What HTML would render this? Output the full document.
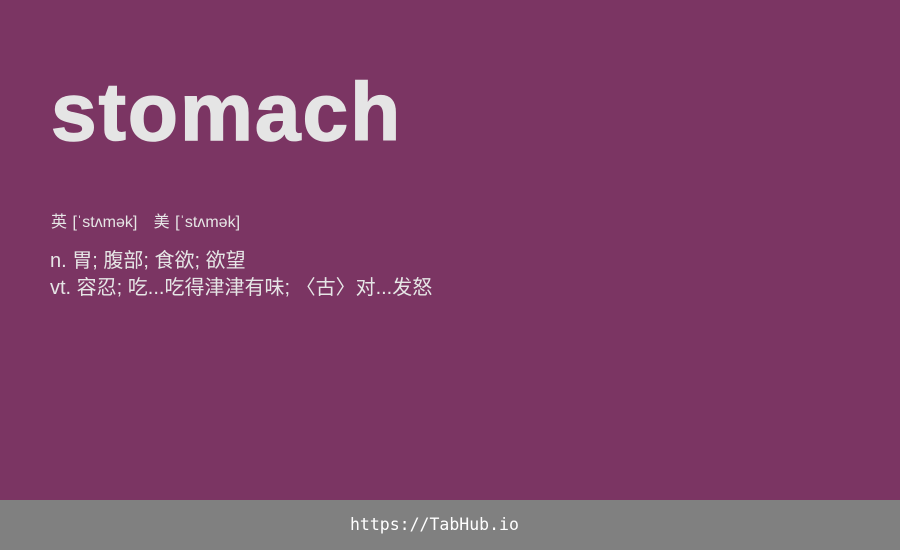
<!DOCTYPE html>
<html><head><meta charset="utf-8"><style>
body{margin:0;width:900px;height:550px;background:#7b3563;position:relative;overflow:hidden;font-family:"Liberation Sans","Noto Sans CJK SC",sans-serif;color:#e6e6e6}
.w{position:absolute;left:51px;top:63px;font-size:82px;font-weight:bold;line-height:100px;letter-spacing:2px;color:#e5e5e5;-webkit-text-stroke:1.5px #e5e5e5}
.p{position:absolute;left:51px;top:212px;font-size:16px;line-height:22px;word-spacing:1px}
.d{position:absolute;left:50px;top:248px;font-size:20px;line-height:27px}
.f{position:absolute;left:350px;top:500px;height:50px;color:#fff;font-family:"DejaVu Sans Mono","Liberation Mono",monospace;font-size:16.5px;line-height:50px}
.bar{position:absolute;left:0;top:500px;width:900px;height:50px;background:#808080}
</style></head><body>
<div class="w">stomach</div>
<div class="p">英 [ˈstʌmək] &nbsp;&nbsp;美 [ˈstʌmək]</div>
<div class="d">n. 胃; 腹部; 食欲; 欲望<br>vt. 容忍; 吃...吃得津津有味; 〈古〉对...发怒</div>
<div class="bar"></div>
<div class="f">https://TabHub.io</div>
</body></html>
